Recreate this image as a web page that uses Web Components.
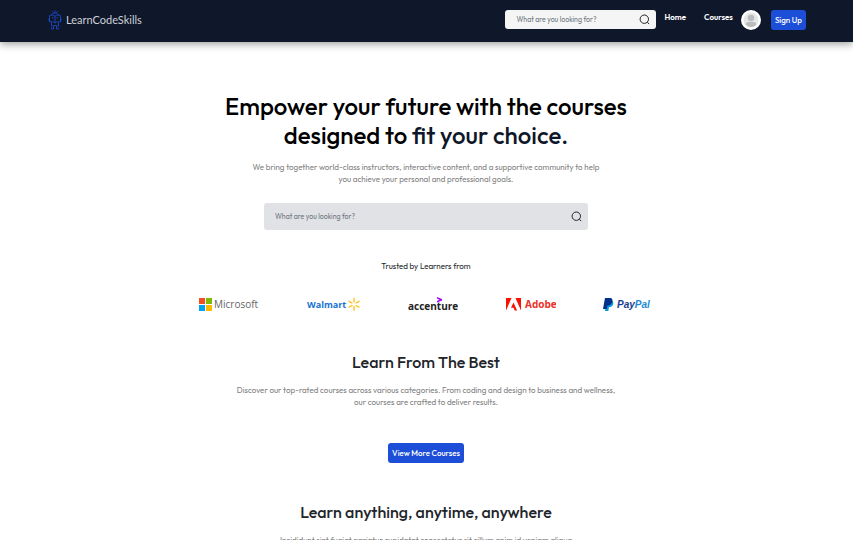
<!DOCTYPE html>
<html lang="en">
<head>
<meta charset="utf-8">
<meta name="viewport" content="width=device-width, initial-scale=1">
<title>LearnCodeSkills</title>
<style>
  body { margin: 0; background: #fff; color: #212529; font: 400 8px/12px Outfit, Lato, "Open Sans", sans-serif; }
</style>
</head>
<body>
<learn-page></learn-page>
<script>
function define(name, html) {
  const template = document.createElement('template');
  template.innerHTML = html;
  customElements.define(name, class extends HTMLElement {
    connectedCallback() {
      if (this.shadowRoot) return;
      this.attachShadow({ mode: 'open' }).append(template.content.cloneNode(true));
    }
  });
}

define('brand-logo', `
<style>
  :host { display: block; }
  a { display: flex; align-items: center; gap: 4px; color: #ced1d8; text-decoration: none; font-family: Lato, sans-serif; font-size: 11px; line-height: 20px; font-weight: 400; }
  svg { width: 14px; height: 20px; }
</style>
<a href="#"><svg viewBox="0 0 14 20" fill="none" stroke="#1d4ed8" stroke-width=".8" aria-hidden="true">
  <path d="M7 .5v2M4.500 1.200l1 1.500M9.500 1.200l-1 1.500M3.500 5.300c0-3 7-3 7 0M1.500 5.500c2-1 4-.5 5.500.8 1.500-1.300 3.500-1.800 5.500-.8v6.500c-2-.7-4-.3-5.500 1-1.500-1.300-3.500-1.700-5.500-1zM7 6.300V13M1.500 8.500c-1.200.5-1.200 2 0 2.500M12.500 8.500c1.200.5 1.200 2 0 2.500M3.500 12.500v3.500h2.500l1-1 1 1h2.500v-3.500M5.500 16v3h-2v-1.500M8.500 16v3h2v-1.500M4 7.500l1.500.5M10 7.500L8.500 8"/>
</svg><span>LearnCodeSkills</span></a>`);

define('search-box', `
<style>
  :host { display: block; }
  form { display: flex; align-items: center; box-sizing: border-box; height: var(--search-height, 27px); padding: 0 6px 0 11px; background: var(--search-bg, #e1e2e6); border-radius: 3px; }
  input { flex: 1; min-width: 0; padding: 1px 0 0; border: 0; outline: 0; background: none; font: inherit; font-size: 7px; line-height: 12px; color: #333; }
  input::placeholder { color: #6c757d; opacity: 1; }
  button { display: flex; padding: 0; border: 0; background: none; color: #222; }
  svg { width: 11px; height: 11px; }
</style>
<form role="search">
  <input type="text" aria-label="Search courses" placeholder="What are you looking for?">
  <button type="button" aria-label="Search"><svg viewBox="0 0 11 11" fill="none" stroke="currentColor" stroke-width="1"><circle cx="5.300" cy="5.200" r="4.200"/><path d="M8.300 8.200l1.900 1.900"/></svg></button>
</form>`);

define('action-button', `
<style>
  :host { display: inline-block; }
  button { display: block; padding: 4px; border: 0; border-radius: 3px; background: #1d4ed8; color: #fff; font: inherit; font-weight: 500; line-height: 12px; white-space: nowrap; }
</style>
<button type="button"><slot></slot></button>`);

define('site-header', `
<style>
  :host { display: block; background: #0f172a; box-shadow: 0 2px 8px rgba(0,0,0,.4); }
  header { display: flex; align-items: center; justify-content: space-between; gap: 16px; padding: 10px 47px 12px 48px; }
  .right, nav { display: flex; }
  .right { align-items: flex-start; }
  search-box { width: 151px; --search-height: 19px; --search-bg: #f5f5f5; margin-right: 8px; }
  nav { gap: 18px; padding-top: 1px; margin-right: 8px; }
  nav a { color: #fff; text-decoration: none; font-weight: 600; line-height: 12px; }
  .avatar { display: flex; padding: 0; border: 0; background: none; margin-right: 10px; }
  .avatar svg { width: 20px; height: 20px; }
</style>
<header>
  <brand-logo></brand-logo>
  <div class="right">
    <search-box></search-box>
    <nav><a href="#">Home</a><a href="#">Courses</a></nav>
    <button class="avatar" type="button" aria-label="Account"><svg viewBox="0 0 20 20"><circle cx="10" cy="10" r="10" fill="#fff"/><circle cx="10" cy="10" r="7.500" fill="#e6e7e7"/><circle cx="10" cy="8" r="3.300" fill="#b9bcbd"/><path d="M4.500 14c1-3 10-3 11 0-2.500 4-8.500 4-11 0z" fill="#b9bcbd"/></svg></button>
    <action-button>Sign Up</action-button>
  </div>
</header>`);

define('section-heading', `
<style>
  :host { display: block; text-align: center; }
  h2 { margin: 0 0 12px; font-size: 16px; line-height: 20px; font-weight: 500; }
  p { max-width: var(--copy-width, 384px); margin: 0 auto; color: #808080; }
</style>
<h2><slot name="title"></slot></h2>
<p><slot></slot></p>`);

define('hero-banner', `
<style>
  :host { display: block; text-align: center; color: #000; }
  h1 { max-width: 420px; margin: 0 auto 11px; font-size: 24px; line-height: 29px; font-weight: 500; }
  h1 span { color: #0f172a; }
  p { max-width: 356px; margin: 0 auto 18px; color: #808080; }
  search-box { max-width: 324px; margin: 0 auto; text-align: left; }
</style>
<h1>Empower your future with the courses designed to <span>fit your choice.</span></h1>
<p>We bring together world-class instructors, interactive content, and a supportive community to help you achieve your personal and professional goals.</p>
<search-box></search-box>`);

define('partner-list', `
<style>
  :host { display: block; text-align: center; color: #212529; }
  p { margin: 0 0 25px; }
  ul { display: flex; justify-content: space-between; max-width: 454px; margin: 0 auto; padding: 0; list-style: none; }
  li { display: flex; height: 16px; }
  svg { display: block; height: 16px; }
  text { font-family: "Open Sans", sans-serif; font-size: 10px; font-weight: 700; }
</style>
<p>Trusted by Learners from</p>
<ul>
  <li><svg width="60" viewBox="0 0 60 16" role="img" aria-label="Microsoft"><path fill="#f25022" d="M0 1h6v6H0z"/><path fill="#7fba00" d="M7 1h6v6H7z"/><path fill="#00a4ef" d="M0 8h6v6H0z"/><path fill="#ffb900" d="M7 8h6v6H7z"/><text x="15" y="11" style="font-weight:500" fill="#666">Microsoft</text></svg></li>
  <li><svg width="54" viewBox="0 0 54 16" role="img" aria-label="Walmart"><text x="0" y="11" style="font-size:9px" fill="#1673d1">Walmart</text><path d="M47 5V1.500M47 9.500V13M45 6L42 4.300M45 8.500l-3 1.700M49 6l3-1.700M49 8.500l3 1.700" stroke="#ffc220" stroke-width="1.400" stroke-linecap="round"/></svg></li>
  <li><svg width="50" viewBox="0 0 50 16" role="img" aria-label="Accenture"><text x="0" y="13" fill="#222">accenture</text><path fill="#a100ff" d="M29 0l5 2v1.500L29 5.500V4l2.500-1.300L29 1.500z"/></svg></li>
  <li><svg width="50" viewBox="0 0 50 16" role="img" aria-label="Adobe"><path fill="#fa0f00" d="M0 1h5.500L0 13.500zM9.500 1H15v12.500zM7.500 5.500l3.600 8H8.700l-1.100-2.700H5z"/><text x="19" y="11" fill="#ed3028">Adobe</text></svg></li>
  <li><svg width="50" viewBox="0 0 50 16" role="img" aria-label="PayPal"><path fill="#009cde" d="M4 4h6c1 4-1 6-4 6l-.7 4H2z"/><path fill="#003087" d="M2 1h4.500c3 0 3.500 2 2.500 4.500C8 8 6.500 8.500 4.500 8.500L3.700 12H0z"/><text x="14" y="11" style="font-family:'Liberation Sans',sans-serif;font-style:italic" fill="#183a8c">Pay<tspan fill="#1d8ad2">Pal</tspan></text></svg></li>
</ul>`);

define('learn-page', `
<style>
  :host { display: block; }
  main { padding: 50px 17px 24px 16px; }
  partner-list { margin-top: 30px; }
  .best { margin-top: 39px; }
  .more { display: flex; justify-content: center; margin: 35px 0 39px; }
  .anywhere { --copy-width: 320px; }
</style>
<site-header></site-header>
<main>
  <hero-banner></hero-banner>
  <partner-list></partner-list>
  <section-heading class="best"><span slot="title">Learn From The Best</span>Discover our top-rated courses across various categories. From coding and design to business and wellness, our courses are crafted to deliver results.</section-heading>
  <div class="more"><action-button>View More Courses</action-button></div>
  <section-heading class="anywhere"><span slot="title">Learn anything, anytime, anywhere</span>Incididunt sint fugiat pariatur cupidatat consectetur sit cillum anim id veniam aliqua</section-heading>
</main>`);
</script>
</body>
</html>
